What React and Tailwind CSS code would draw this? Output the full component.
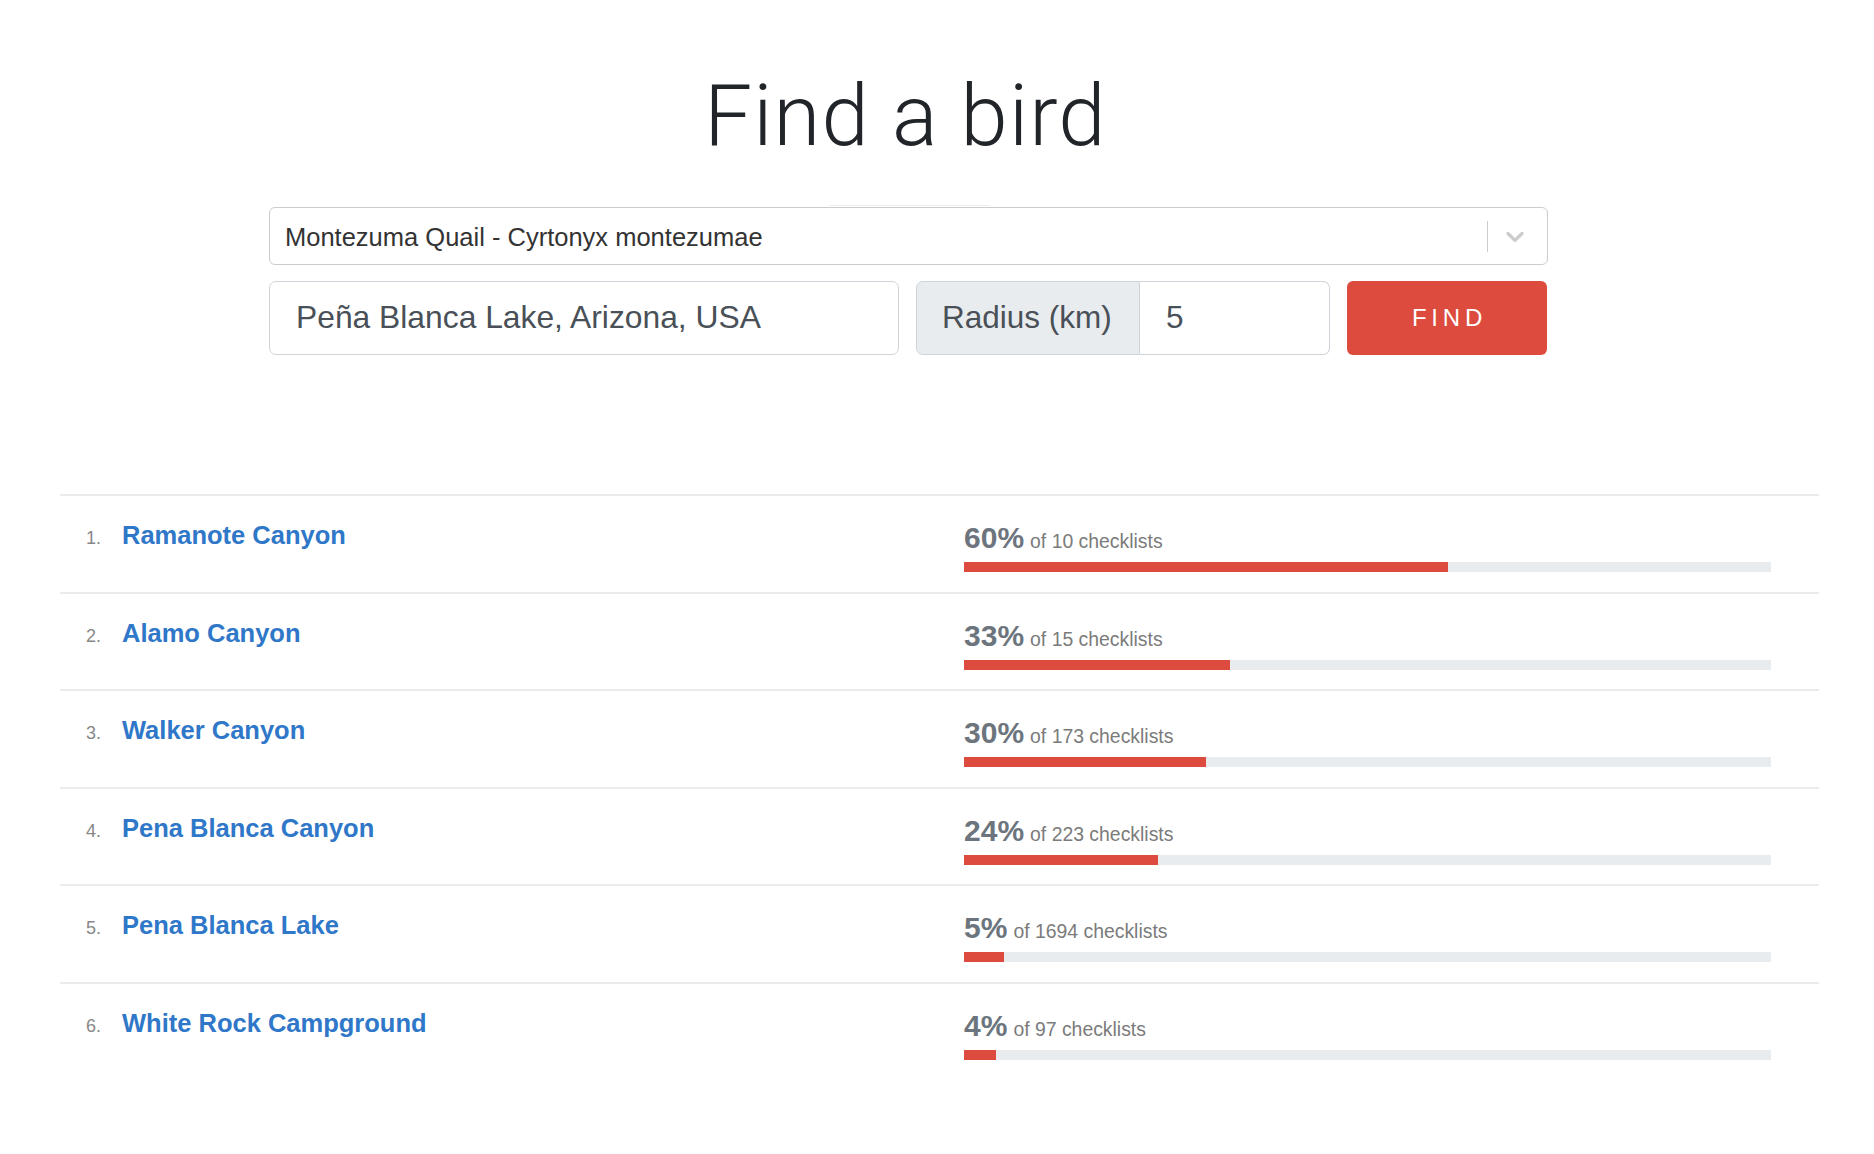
import React from "react";

const rows = [
  { n: 1, name: "Ramanote Canyon", pct: 60, total: 10 },
  { n: 2, name: "Alamo Canyon", pct: 33, total: 15 },
  { n: 3, name: "Walker Canyon", pct: 30, total: 173 },
  { n: 4, name: "Pena Blanca Canyon", pct: 24, total: 223 },
  { n: 5, name: "Pena Blanca Lake", pct: 5, total: 1694 },
  { n: 6, name: "White Rock Campground", pct: 4, total: 97 },
];

function Chevron() {
  return (
    <svg width="30" height="30" viewBox="0 0 20 20" fill="#cccccc" aria-hidden="true">
      <path d="M4.516 7.548c0.436-0.446 1.043-0.481 1.576 0l3.908 3.747 3.908-3.747c0.533-0.481 1.141-0.446 1.574 0 0.436 0.445 0.408 1.197 0 1.615-0.406 0.418-4.695 4.502-4.695 4.502-0.217 0.223-0.502 0.335-0.787 0.335s-0.57-0.112-0.789-0.335c0 0-4.287-4.084-4.695-4.502s-0.436-1.17 0-1.615z" />
    </svg>
  );
}

export default function App() {
  return (
    <div className="min-h-[1154px] w-full bg-white font-['Liberation_Sans',Arial,sans-serif]">
      <div className="ml-[269px] w-[1279px] pt-[74px]">
        <h1 className="pr-[6px] text-center font-['Roboto',sans-serif] text-[85px] font-light leading-none tracking-[1.2px] text-[#212529]">
          Find a bird
        </h1>

        <div className="relative mt-[48px] flex h-[58px] items-center rounded-[6px] border border-[#cccccc] bg-white pl-[15px] pr-[5px]">
          <div className="absolute -top-[3px] left-[559px] h-px w-[160px] bg-[#ececec]" />
          <span className="flex-1 pt-[3px] text-[25.5px] leading-none text-[#333333]">
            Montezuma Quail - Cyrtonyx montezumae
          </span>
          <span className="h-[31px] w-px bg-[#cccccc]" />
          <span className="flex w-[54px] items-center justify-center">
            <Chevron />
          </span>
        </div>

        <div className="mt-[16px] flex h-[74px] gap-[17px]">
          <div className="flex w-[630px] items-center rounded-[7px] border border-[#ced4da] bg-white pl-[26px] text-[31.8px] leading-none text-[#495057]">
            Peña Blanca Lake, Arizona, USA
          </div>
          <div className="flex w-[414px]">
            <div className="flex w-[224px] items-center rounded-l-[7px] border border-[#ced4da] bg-[#e9ecef] pl-[25px] text-[31.5px] leading-none text-[#495057]">
              Radius (km)
            </div>
            <div className="flex flex-1 items-center rounded-r-[7px] border border-l-0 border-[#ced4da] bg-white pl-[26px] text-[31.5px] leading-none text-[#495057]">
              5
            </div>
          </div>
          <button className="flex w-[200px] items-center justify-center rounded-[6px] bg-[#dc4b3e] pl-[5px] text-[24px] leading-none tracking-[0.2em] text-white">
            FIND
          </button>
        </div>
      </div>

      <div className="ml-[60px] mt-[139px] w-[1759px]">
        {rows.map((r) => (
          <div key={r.n} className="flex h-[97.5px] border-t-2 border-[#ebebeb]">
            <div className="flex flex-1 items-baseline pl-[26px] pt-[27px]">
              <span className="w-[36px] text-[18px] leading-none text-[#888888]">{r.n}.</span>
              <span className="text-[25.5px] font-bold leading-none text-[#2f77c8]">{r.name}</span>
            </div>
            <div className="w-[855px] pr-[48px] pt-[27px]">
              <div className="flex items-baseline leading-none">
                <span className="text-[30px] font-bold text-[#6c757d]">{r.pct}%</span>
                <span className="ml-[6px] text-[19.4px] text-[#7b7b7b]">of {r.total} checklists</span>
              </div>
              <div className="mt-[9px] h-[10px] w-full bg-[#e9ecef]">
                <div className="h-full bg-[#dc4b3e]" style={{ width: `${r.pct}%` }} />
              </div>
            </div>
          </div>
        ))}
      </div>
    </div>
  );
}
